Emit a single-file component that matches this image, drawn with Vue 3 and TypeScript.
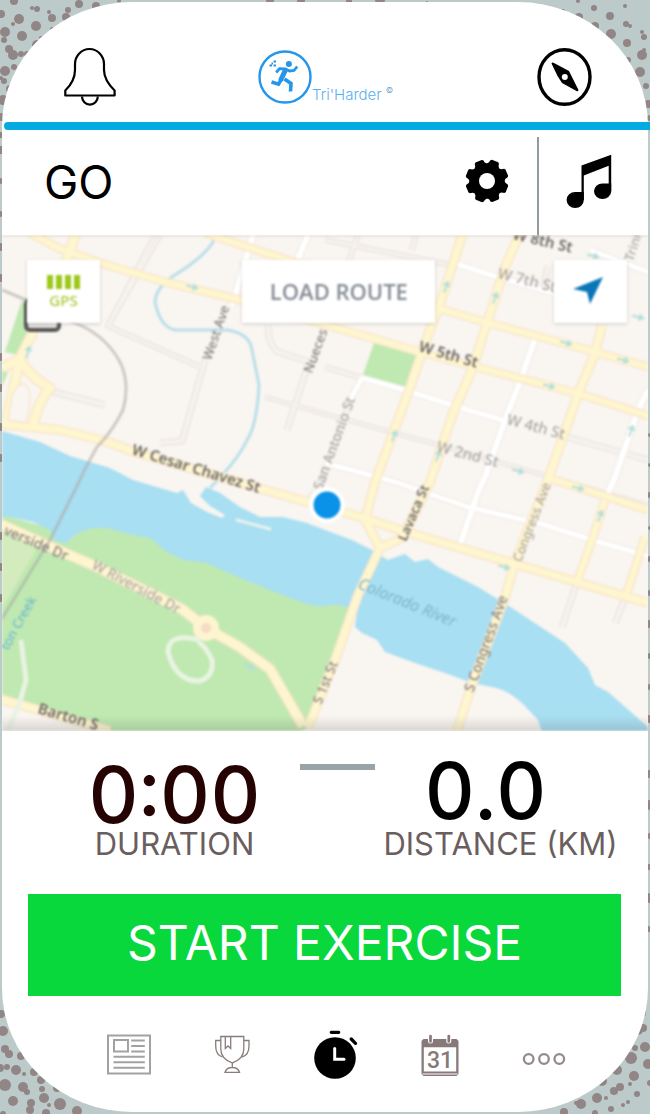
<script setup lang="ts">
type Dot = [number, number, number]
interface Road { d: string; w: number }
interface MapLabel { t: string; x: number; y: number; a: number; s: number; k: string }

const dots: Dot[] = [
  [14, 1, 4], [1, 14, 4], [19, 19, 5], [32, 8, 2], [37, 9, 3], [36, 26, 5], [52, 18, 4], [49, 12, 2], [68, 10, 3],
  [79, 4, 4], [66, 17, 4], [5, 32, 5], [13, 24, 2], [22, 36, 5], [4, 40, 3], [9, 49, 4], [13, 55, 5], [21, 54, 3],
  [27, 54, 3], [37, 45, 5], [41, 38, 2], [5, 71, 5], [14, 67, 3], [4, 81, 3], [1, 78, 2], [10, 89, 4], [3, 100, 5],
  [7, 100, 3], [2, 117, 4], [52, 29, 2], [96, 6, 4], [1, 135, 3], [1, 150, 4], [0, 181, 3], [0, 214, 3], [119, 1, 2],
  [349, 1, 3], [380, 0, 5], [427, 2, 1], [270, 0, 4], [301, 0, 4], [563, 11, 2], [578, 1, 2], [594, 8, 3], [610, 16, 4],
  [579, 17, 4], [595, 26, 4], [611, 34, 5], [626, 24, 3], [630, 26, 2], [625, 6, 2], [642, 32, 2], [644, 37, 3],
  [627, 43, 4], [642, 55, 5], [628, 60, 3], [640, 72, 5], [646, 86, 3], [648, 104, 4], [650, 118, 3], [644, 50, 2],
  [1, 1014, 4], [3, 1031, 5], [5, 1049, 4], [9, 1054, 4], [21, 1056, 4], [0, 1068, 4], [7, 1067, 3], [16, 1070, 5],
  [24, 1074, 2], [34, 1072, 4], [41, 1080, 4], [5, 1085, 6], [23, 1087, 5], [27, 1092, 3], [42, 1089, 3], [57, 1088, 4],
  [13, 1101, 5], [31, 1103, 4], [30, 1110, 4], [44, 1098, 5], [49, 1105, 2], [60, 1104, 6], [77, 1111, 5], [46, 1113, 4],
  [3, 1114, 3], [642, 1013, 4], [638, 1030, 5], [643, 1028, 4], [631, 1041, 3], [635, 1048, 3], [645, 1047, 5],
  [631, 1058, 6], [648, 1064, 5], [617, 1070, 5], [634, 1076, 5], [602, 1081, 5], [620, 1087, 4], [614, 1091, 4],
  [630, 1084, 2], [650, 1083, 3], [597, 1098, 5], [606, 1098, 2], [637, 1094, 3], [623, 1105, 2], [628, 1102, 2],
  [611, 1109, 3], [581, 1104, 5], [576, 1103, 2], [564, 1112, 4], [595, 1113, 3],
  [0, 247, 4], [0, 278, 4], [0, 357, 4], [0, 388, 4], [0, 427, 4], [0, 458, 4], [0, 536, 4], [0, 567, 4], [0, 598, 4],
  [650, 435, 2], [650, 465, 2], [650, 495, 3], [650, 528, 2], [650, 559, 3], [650, 593, 3], [650, 624, 4],
  [650, 656, 3], [650, 687, 3], [650, 719, 4], [650, 774, 4], [650, 805, 5], [650, 836, 3], [649, 867, 3],
  [648, 898, 5], [648, 929, 3],
]

const minorRoads: Road[] = [
  { d: 'M155 235L108 326L198 366M108 326L160 235', w: 4 },
  { d: 'M205 360L182 441L160 443', w: 5 },
  { d: 'M50 391L105 405', w: 5 },
  { d: 'M268 325Q268 345 278 352L309 362L287 430', w: 5 },
  { d: 'M265 397L325 414L435 444L648 505', w: 3 },
  { d: 'M325 367L362 378', w: 4 },
  { d: 'M325 240L456 266M348 263L358 235M412 250L416 235', w: 4 },
  { d: 'M543 290L548 266M563 436L648 460M577 582L562 627M627 593L615 623', w: 5 },
  { d: 'M315 492L310 498M350 402L318 490', w: 5 },
]

const whiteRoads: Road[] = [
  { d: 'M253 235L232 306', w: 6 },
  { d: 'M308 235L294 268', w: 6 },
  { d: 'M457 264L500 278L620 312', w: 5 },
  { d: 'M590 250L648 272', w: 5 },
  { d: 'M350 400L362 378L408 391L458 407L502 420', w: 5 },
  { d: 'M537 333L518 387L505 420L485 477L478 492L460 545', w: 6 },
  { d: 'M325 463L392 481L468 507L542 524L592 540L648 556', w: 5 },
  { d: 'M648 390L638 410L615 477L605 500', w: 6 },
]

const yellowRoads: Road[] = [
  { d: 'M30 233L60 249L110 266L165 282L240 300L333 327L420 352L480 368L580 394L648 416', w: 6 },
  { d: 'M205 233L290 261L440 309L488 323L570 345L648 367', w: 6 },
  { d: 'M0 424L60 430L105 441L135 452L265 490L360 517L400 530L460 548L515 564L580 583L648 603', w: 7 },
  { d: 'M463 233L450 273L438 310L428 335L408 393L375 482L365 520L380 548L358 595L335 660L308 728', w: 7 },
  { d: 'M520 233L505 267L487 323L472 370L453 413L430 482L402 538L380 548', w: 7 },
  { d: 'M602 325L595 353L578 394L563 437L547 482L515 562L505 597L470 690L457 731', w: 7 },
  { d: 'M605 500L592 540L577 582M645 537L627 593', w: 6 },
  { d: 'M548 478L608 497L648 510', w: 6 },
  { d: 'M76 233L66 262L30 338L20 358L6 424M20 358Q28 376 50 388Q38 402 33 426M2 368L22 358', w: 8 },
  { d: 'M0 524L60 551L95 566L182 609L206 628L238 646L270 669L303 726', w: 8 },
  { d: 'M0 699L35 709L110 731', w: 7 },
]

const labels: MapLabel[] = [
  { t: 'W Cesar Chavez St', x: 131, y: 454, a: 17, s: 15, k: 'dark' },
  { t: 'W 5th St', x: 418, y: 351, a: 16, s: 15, k: 'dark' },
  { t: 'W 8th St', x: 512, y: 239, a: 13, s: 15, k: 'dark' },
  { t: 'W 7th St', x: 497, y: 278, a: 14, s: 15, k: 'soft' },
  { t: 'W 4th St', x: 506, y: 424, a: 15, s: 15, k: 'soft' },
  { t: 'W 2nd St', x: 436, y: 451, a: 15, s: 15, k: 'soft' },
  { t: 'West Ave', x: 211, y: 361, a: -71, s: 13, k: 'mid' },
  { t: 'Nueces', x: 312, y: 374, a: -70, s: 13, k: 'mid' },
  { t: 'San Antonio St', x: 322, y: 491, a: -70, s: 14, k: 'soft' },
  { t: 'Lavaca St', x: 406, y: 542, a: -67, s: 13, k: 'dark' },
  { t: 'Congress Ave', x: 521, y: 563, a: -69, s: 13, k: 'soft' },
  { t: 'S Congress Ave', x: 473, y: 693, a: -70, s: 14, k: 'mid' },
  { t: 'S 1st St', x: 321, y: 705, a: -68, s: 13, k: 'mid' },
  { t: 'verside Dr', x: 3, y: 534, a: 23, s: 14, k: 'mid' },
  { t: 'W Riverside Dr', x: 91, y: 568, a: 28, s: 14, k: 'soft' },
  { t: 'Barton S', x: 37, y: 713, a: 16, s: 15, k: 'dark' },
  { t: 'ton Creek', x: 8, y: 651, a: -61, s: 13, k: 'water' },
  { t: 'Colorado River', x: 357, y: 588, a: 22, s: 16, k: 'river' },
  { t: 'Trinity', x: 633, y: 262, a: -72, s: 13, k: 'soft' },
]

const arrows: Dot[] = [
  [192, 287, 14], [446, 287, -70], [495, 298, -70], [566, 343, 15], [623, 360, 15], [549, 386, 15], [394, 436, -70],
  [518, 471, 14], [631, 431, -70], [504, 567, 15], [578, 488, 15], [600, 516, -70], [249, 666, 35], [593, 256, 14],
  [638, 317, 14], [28, 352, -75], [438, 456, -70],
]

const teeth = [22, 67, 112, 157, 202, 247, 292, 337]
const gpsBars = [0, 1, 2, 3]
</script>

<template>
  <div class="screen">
    <svg class="speckle" viewBox="0 0 650 1114" preserveAspectRatio="none" aria-hidden="true">
      <circle v-for="(p, i) in dots" :key="i" :cx="p[0]" :cy="p[1]" :r="p[2]" />
    </svg>

    <main class="phone">
      <header class="top">
        <button class="plain" type="button" aria-label="Notifications">
          <svg width="54" height="60" viewBox="62 47 54 60" fill="none" stroke="#000" stroke-width="2.2" stroke-linejoin="round">
            <path d="M65.3 95.5V90.5C72 84 75 78 75 70V64A14.5 15 0 0 1 104 64V70C104 78 108 84 114.6 90.5V95.5Z" />
            <path d="M82 96.500A7.800 8 0 0 0 97.800 96.500" />
          </svg>
        </button>
        <a class="brand" href="#" aria-label="Tri'Harder home">
          <svg width="54" height="54" viewBox="257.500 50 54 54" fill="none" stroke="#2596ea">
            <circle cx="284.500" cy="77" r="25.500" stroke-width="2.400" />
            <circle cx="288.400" cy="64" r="3" fill="#2596ea" stroke="none" />
            <path d="M296.700 66.500L293.500 70.500L289 71L285 68.800L279 68.600L275.700 72.500" stroke-width="2.800" />
            <path d="M285 70L280 80.500" stroke-width="5" />
            <path d="M281 79L278 84.200L271 82" stroke-width="3.600" />
            <path d="M284 79L290.500 83.500L290 91.500" stroke-width="3.600" />
            <path d="M273 61.500h2.500M269 65.500h2.500M273 65.500h2.500M271 63.500h1.500" stroke-width="1.800" />
          </svg>
          <span class="name">Tri'Harder</span><sup>©</sup>
        </a>
        <button class="plain" type="button" aria-label="Explore">
          <svg width="56" height="60" viewBox="537 47 56 60">
            <ellipse cx="564.500" cy="77" rx="25.500" ry="27.300" fill="none" stroke="#000" stroke-width="3.400" />
            <path d="M551.500 63.500Q552 62 554 63L569 71L572.500 78L578.500 90Q578 92 576.500 91L562 83L557.500 76Z" />
            <circle cx="564.800" cy="77" r="3" fill="#fff" />
          </svg>
        </button>
      </header>
      <div class="rule"></div>

      <section class="gobar">
        <h1>GO</h1>
        <button class="plain gear" type="button" aria-label="Settings">
          <svg width="44" height="44" viewBox="-22 -22 44 44">
            <circle r="17.500" />
            <path v-for="t in teeth" :key="t" :transform="`rotate(${t})`" d="M-7 -15.500L-5.200 -18L-4.600 -20.500L-3.400 -21.500H3.400L4.600 -20.500L5.200 -18L7 -15.500Z" />
            <circle r="8" fill="#fff" />
          </svg>
        </button>
        <button class="plain music" type="button" aria-label="Music">
          <svg width="46" height="56" viewBox="565.500 152 46 56">
            <path d="M581 164.500L610.700 153.700V190H608.200V164.700L583.300 174.500V199H581Z" />
            <path d="M574.700 191H583.300V199A8.600 8 0 1 1 574.700 191ZM602 182.500H610.700V190.400A8.600 7.800 0 1 1 602 182.500Z" />
          </svg>
        </button>
      </section>

      <section class="map" aria-label="Map">
        <svg class="tiles" viewBox="2 235 646 496" preserveAspectRatio="xMidYMid slice">
          <defs>
            <linearGradient id="shade" x1="0" y1="0" x2="0" y2="1">
              <stop offset="0" stop-color="#555" stop-opacity="0" />
              <stop offset="1" stop-color="#555" stop-opacity=".2" />
            </linearGradient>
          </defs>
          <rect x="-10" y="220" width="680" height="530" fill="#f9f5f0" />
          <path fill="#bfe9b1" d="M-5 510L10 517L50 528L60 541L83 528L107 525L150 535L200 560L320 600L350 606L308 728L300 731H100L-5 695Z" />
          <path fill="#d3ebbd" d="M-5 525L38 547L-5 620Z" />
          <path fill="#bfe9b1" d="M375 340L418 352L407 387L363 375ZM22 300L34 325L18 355L5 352ZM0 362H12L0 392Z" />
          <path
            fill="#a9dff2"
            d="M-5 429L40 442L70 456L110 468L133 480L177 493L183 490L191 503L207 512L222 518L225 515L210 506L200 496L206 487L220 493L240 507L260 517L283 517L307 523L325 530L352 540L372 550L388 560L396 557L405 554L415 562L428 559L438 567L478 587L512 608L565 643L588 668L595 685L608 692L648 727V735H543L538 720L522 703Q508 690 492 687L472 683L445 673L415 663L385 652L377 640L362 633L355 627L357 612Q340 602 325 606Q315 608 290 598L240 578L207 563L183 560L167 552L150 538L133 535L107 528Q80 526 67 543L55 541L50 530L33 522L10 517L-5 516Z"
          />
          <path d="M237 520L270 529" stroke="#e9f2ee" stroke-width="3" fill="none" stroke-linecap="round" />
          <path d="M215 238Q208 254 178 273Q156 286 155 302Q160 327 175 330L228 330Q250 334 252 350L259 385Q257 425 247 440Q238 460 210 488" fill="none" stroke="#b9dfea" stroke-width="3" />
          <g fill="none" stroke-linejoin="round">
            <path v-for="(r, i) in minorRoads" :key="'a' + i" :d="r.d" :stroke-width="r.w + 2" stroke="#ebe6e2" />
            <path v-for="(r, i) in minorRoads" :key="'b' + i" :d="r.d" :stroke-width="r.w - 1" stroke="#f6f2ee" />
            <path v-for="(r, i) in whiteRoads" :key="'c' + i" :d="r.d" :stroke-width="r.w + 2" stroke="#eeeae5" />
            <path v-for="(r, i) in whiteRoads" :key="'d' + i" :d="r.d" :stroke-width="r.w" stroke="#fff" />
            <path v-for="(r, i) in yellowRoads" :key="'e' + i" :d="r.d" :stroke-width="r.w + 3" stroke="#fae6cb" />
            <path v-for="(r, i) in yellowRoads" :key="'f' + i" :d="r.d" :stroke-width="r.w" stroke="#fef6cf" />
            <circle cx="206" cy="628" r="9" stroke="#fef4cf" stroke-width="8" fill="#f5dcc5" />
            <path d="M12 395Q22 376 29 390Q32 400 26 423L8 420Z" fill="#f9f5f0" stroke="#f6dfc2" />
            <path d="M21 640L26 680L20 702L8 730" stroke="#eaf3e4" stroke-width="5" />
            <path d="M200 640Q168 632 168 652Q176 682 200 681Q214 676 212 660Q205 645 198 642" stroke="#e9f4e2" stroke-width="5" />
            <path d="M0 289L26 300L80 325Q108 338 121 364Q130 385 123 410Q112 432 97 447Q85 468 79 482L50 540L0 622" stroke="#a9a6a4" stroke-opacity=".55" stroke-width="3" />
            <rect x="26" y="300" width="33" height="30" rx="4" fill="#e3dfdc" stroke="#555" stroke-width="4" />
          </g>
          <path v-for="(p, i) in arrows" :key="'g' + i" :transform="`translate(${p[0]} ${p[1]}) rotate(${p[2]})`" d="M-6 -1H1V-4L7 0L1 4V1H-6Z" fill="#b4dedb" />
          <text v-for="l in labels" :key="l.t" :class="l.k" :font-size="l.s" :transform="`translate(${l.x} ${l.y}) rotate(${l.a})`">{{ l.t }}</text>
          <rect x="-10" y="716" width="680" height="15" fill="url(#shade)" />
          <rect x="-10" y="232" width="680" height="5" fill="#000" opacity=".07" />
          <circle cx="327" cy="505" r="18" fill="#fff" />
          <circle cx="327" cy="505" r="13.500" fill="#0a91e8" />
        </svg>

        <div class="controls">
          <button type="button" class="chip gps">
            <span class="bars"><i v-for="b in gpsBars" :key="b"></i></span>
            <span>GPS</span>
          </button>
          <button type="button" class="chip load">LOAD ROUTE</button>
          <button type="button" class="chip locate" aria-label="My location">
            <svg width="32" height="30" viewBox="0 0 32 30"><path d="M31 1L18 28L15 16L1 13Z" fill="#0a76b8" /></svg>
          </button>
        </div>
      </section>

      <section class="stats">
        <div class="stat">
          <strong class="time">0:00</strong>
          <span>DURATION</span>
        </div>
        <div class="dash"></div>
        <div class="stat">
          <strong class="dist">0.0</strong>
          <span>DISTANCE (KM)</span>
        </div>
      </section>

      <button type="button" class="start">START EXERCISE</button>

      <nav class="tabs">
        <a href="#" aria-label="News">
          <svg width="46" height="50" viewBox="106.500 1031 46 50" fill="none" stroke="#a3a1a1" stroke-width="2">
            <rect x="108.500" y="1035.500" width="42" height="38" />
            <rect x="114.500" y="1040" width="14" height="11.500" />
            <path d="M131.700 1040.500H145.300M131.700 1046H145.300M131.700 1051.500H145.300M114 1056.800H145.300M114 1062.300H145.300M114 1067.800H145.300" />
          </svg>
        </a>
        <a href="#" aria-label="Awards">
          <svg width="36" height="50" viewBox="211 1031 36 50" fill="none" stroke="#8a7c7c" stroke-width="1.300">
            <path d="M217.800 1036.500H240.800V1049Q240.800 1059 229.300 1062.800Q217.800 1059 217.800 1049Z" />
            <path d="M217.800 1040.500H212.700V1046Q212.700 1055 219.500 1057M240.800 1040.500H246V1046Q246 1055 239 1057" />
            <path d="M222.300 1036.500V1048.500L225 1046L227.700 1048.500V1036.500M229.300 1063V1067.500M222 1072.300H236.500Q235 1067.500 229.300 1067.500Q223.500 1067.500 222 1072.300Z" />
          </svg>
        </a>
        <a href="#" aria-label="Exercise" aria-current="page">
          <svg width="46" height="54" viewBox="310 1027 46 54" fill="none" stroke-linecap="round">
            <circle cx="333" cy="1056" r="20.800" fill="#000" />
            <path d="M329.300 1030.300H336.700M349.200 1037L353.500 1041.300" stroke="#000" stroke-width="3.300" />
            <path d="M332.700 1046.500V1057.300H342" stroke="#fff" stroke-width="3" />
          </svg>
        </a>
        <a href="#" aria-label="Calendar">
          <svg width="40" height="50" viewBox="420.500 1031 40 50">
            <path d="M424 1039H457L459 1041V1074L457 1076H424L422 1074V1041Z" fill="#877979" />
            <path d="M424.300 1047.300H456.700V1071.500H424.300Z" fill="#fff" />
            <path d="M423 1074H458" stroke="#fff" stroke-width="1" />
            <path d="M431 1036V1041M449.300 1036V1041" stroke="#fff" stroke-width="5" stroke-linecap="round" />
            <path d="M431 1036V1041.500M449.300 1036V1041.500" stroke="#877979" stroke-width="2.700" stroke-linecap="round" />
            <text class="day" x="440.500" y="1068" text-anchor="middle">31</text>
          </svg>
        </a>
        <a href="#" aria-label="More">
          <svg width="44" height="50" viewBox="523 1031 44 50" fill="none" stroke="#958a8a" stroke-width="2.300">
            <circle cx="529.700" cy="1059" r="4.800" /><circle cx="545" cy="1059" r="4.800" /><circle cx="560.300" cy="1059" r="4.800" />
          </svg>
        </a>
      </nav>
    </main>
  </div>
</template>

<style>
html, body { background: #bccbc9; }
</style>

<style scoped>
.screen {
  position: relative;
  min-height: 100vh;
  box-sizing: border-box;
  display: flex;
  padding: 2px;
  overflow: hidden;
  font-family: Inter, "Open Sans", sans-serif;
  color: #000;
}
.screen * { box-sizing: border-box; }
.speckle { position: absolute; inset: 0; width: 100%; height: 100%; fill: #918585; }
.phone {
  position: relative;
  flex: 1;
  min-width: 0;
  display: flex;
  flex-direction: column;
  background: #fff;
  border-radius: 130px / 124px;
}
button { font: inherit; cursor: pointer; }
.plain { display: flex; padding: 0; border: 0; background: none; color: inherit; }
svg { display: block; }

.top { height: 120px; padding: 30px 55px 0 60px; display: flex; align-items: center; justify-content: space-between; }
.brand { display: flex; align-items: center; margin-right: 2px; color: #5bb0f2; text-decoration: none; font-weight: 300; }
.name { font-size: 15px; line-height: 18px; padding-top: 36px; }
.brand sup { font-size: 8px; line-height: 8px; padding: 26px 0 0 4px; color: #2b80c0; }
.rule { height: 8px; margin: 0 -2px 0 2px; border-radius: 4px 0 0 4px; background: #04abe0; }

.gobar { height: 105px; display: flex; align-items: stretch; padding-left: 42px; }
h1 { flex: 1; margin: 0; font-size: 46px; line-height: 104px; font-weight: 400; }
.gear { align-items: center; padding: 0 28px 4px 0; }
.music { width: 111px; margin-top: 7px; align-items: center; justify-content: center; padding: 0 10px 11px 0; border-left: 2px solid #8f9ba0; }

.map { position: relative; flex: 1 0 400px; overflow: hidden; background: #f9f5f0; }
.tiles { position: absolute; inset: 0; width: 100%; height: 100%; filter: blur(1px); }
.tiles text { font-family: "Noto Sans", sans-serif; }
.tiles .dark { fill: #6b6765; font-weight: 600; }
.tiles .mid { fill: #85817f; font-weight: 500; }
.tiles .soft { fill: #aca8a6; font-weight: 500; }
.tiles .water { fill: #66b2cf; }
.tiles .river { fill: #7cb4c6; font-style: italic; }
.controls {
  position: relative;
  display: grid;
  grid-template-columns: 73px 6fr 193px 5fr 73px;
  padding: 25px 21px 0 25px;
  filter: blur(1px);
}
.chip {
  height: 63px;
  padding: 0;
  border: 0;
  background: #fff;
  box-shadow: 0 1px 3px rgba(0, 0, 0, .2);
  display: flex;
  align-items: center;
  justify-content: center;
  font-family: "Noto Sans", sans-serif;
}
.gps { grid-column: 1; flex-direction: column; gap: 3px; color: #a8c93a; font-size: 15px; line-height: 16px; font-weight: 500; }
.bars { display: flex; gap: 3px; }
.bars i { width: 6px; height: 14px; background: #9cc819; }
.load { grid-column: 3; color: #858b95; padding-bottom: 2px; font-size: 22px; font-weight: 600; font-family: "Open Sans", sans-serif; }
.locate { grid-column: 5; padding: 0 4px 2px 0; }

.stats { height: 163px; padding: 0 22px 0 47px; display: grid; grid-template-columns: 1fr 75px 1fr; }
.stat { display: flex; flex-direction: column; align-items: center; white-space: nowrap; }
.stat strong { height: 97px; font-size: 78px; line-height: 66px; font-weight: 500; font-variant-numeric: tabular-nums; }
.time { padding-top: 31px; color: #250303; }
.dist { padding: 27px 30px 0 0; }
.stat span { font-size: 31px; line-height: 32px; color: #6a5e5e; }
.dash { height: 6px; margin-top: 33px; background: #99a4a8; }

.start {
  height: 102px;
  margin: 0 27px 0 26px;
  padding: 0 0 4px;
  border: 0;
  background: #09d83c;
  color: #fff;
  font-size: 48px;
  line-height: 56px;
}
.tabs { height: 116px; padding: 3px 82px 0 104px; display: flex; align-items: center; justify-content: space-between; }
.day { font: 500 23px Roboto, sans-serif; fill: #877979; }
</style>
